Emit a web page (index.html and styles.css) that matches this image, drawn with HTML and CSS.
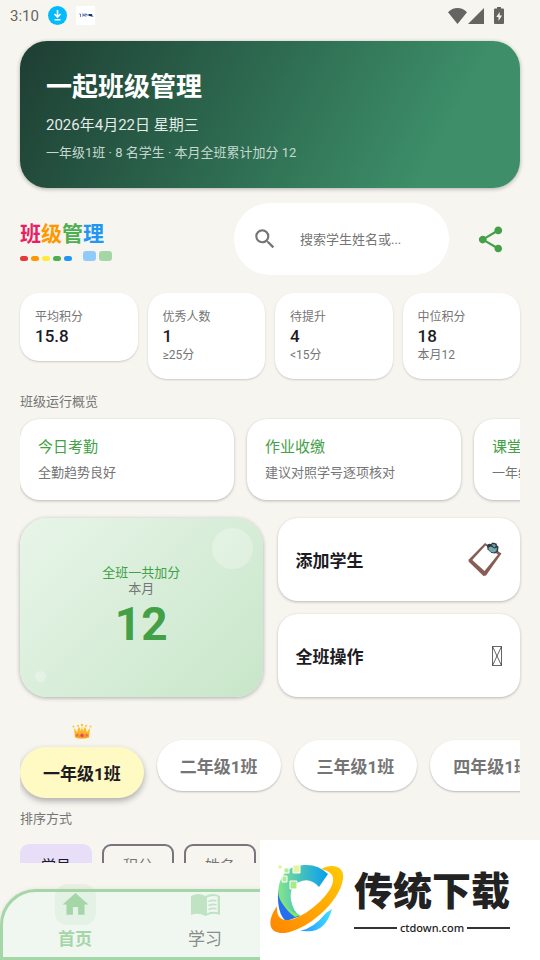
FILE: index.html
```html
<!DOCTYPE html>
<html lang="zh-CN">
<head>
    <meta charset="UTF-8">
    <meta name="viewport" content="width=device-width, initial-scale=1.0">
    <title>一起班级管理</title>
    <link rel="stylesheet" href="styles.css">
</head>
<body>
    <div class="status-bar">
        <span class="time">3:10</span>
        <svg class="status-app" viewBox="0 0 19 19">
            <circle cx="9.500" cy="9.500" r="9.500" fill="#03bafc"/>
            <path d="M9.500 4v6.500M6.500 8l3 3 3-3M6.500 13.700h6" fill="none" stroke="#fff" stroke-width="1.600"/>
        </svg>
        <svg class="status-app" viewBox="0 0 19 19">
            <rect width="19" height="19" fill="#fff"/>
            <path d="M3.300 8h1.200v3M6 8h1.400v2H6M8.500 8h2v.8h-2V10h2M11.500 8l2 2M13.500 8l-2 2" fill="none" stroke="#4a5f92" stroke-width=".8"/>
            <path d="M13 8h3l.3 1.500 1.400 1.300-4.700-.8z" fill="#15336d"/>
        </svg>
        <div class="status-right">
            <svg class="wifi" viewBox="0 0 19 16"><path d="M0 4.300C5-1.400 14-1.400 19 4.300L9.500 16z"/></svg>
            <svg class="signal" viewBox="0 0 16 16"><path d="M16 0v16H0z"/></svg>
            <svg class="battery" viewBox="0 0 10 17"><path d="M3 0h4v1.500h2a1 1 0 0 1 1 1V16a1 1 0 0 1-1 1H1a1 1 0 0 1-1-1V2.500a1 1 0 0 1 1-1h2z"/><path d="M5.700 5v3.600H8L4.500 14v-3.900H2.300z" fill="#f7f5f0"/></svg>
        </div>
    </div>

    <main>
        <header class="banner">
            <h1>一起班级管理</h1>
            <p class="date">2026年4月22日 星期三</p>
            <p class="summary">一年级1班 · 8 名学生 · 本月全班累计加分 12</p>
        </header>

        <div class="toolbar">
            <div class="logo">
                <div class="logo-text"><span class="pink">班</span><span class="orange">级</span><span class="green">管</span><span class="blue">理</span></div>
                <div class="logo-marks">
                    <i class="dot bg-red"></i>
                    <i class="dot bg-orange"></i>
                    <i class="dot bg-yellow"></i>
                    <i class="dot bg-green"></i>
                    <i class="dot bg-blue"></i>
                    <i class="block bg-sky"></i>
                    <i class="block bg-mint"></i>
                </div>
            </div>
            <label class="search">
                <svg viewBox="0 0 24 24"><path d="M15.500 14h-.79l-.28-.27A6.471 6.471 0 0 0 16 9.500 6.500 6.500 0 1 0 9.500 16c1.610 0 3.090-.59 4.230-1.570l.27.28v.79l5 4.990L20.490 19l-4.990-5zm-6 0C7.010 14 5 11.990 5 9.500S7.010 5 9.500 5 14 7.010 14 9.500 11.990 14 9.500 14z"/></svg>
                <input type="text" placeholder="搜索学生姓名或..." aria-label="搜索学生姓名">
            </label>
            <button class="share" aria-label="分享">
                <svg viewBox="0 0 24 24"><path d="M18 16.080c-.76 0-1.440.3-1.960.77L8.910 12.700c.05-.23.09-.46.09-.7s-.04-.47-.09-.7l7.050-4.110c.54.5 1.250.81 2.040.81 1.660 0 3-1.340 3-3s-1.340-3-3-3-3 1.340-3 3c0 .24.040.47.090.7L8.040 9.810C7.500 9.310 6.790 9 6 9c-1.660 0-3 1.340-3 3s1.340 3 3 3c.79 0 1.500-.31 2.040-.81l7.120 4.160c-.05.21-.08.43-.08.65 0 1.610 1.310 2.920 2.920 2.920s2.920-1.310 2.920-2.920-1.310-2.920-2.920-2.920z"/></svg>
            </button>
        </div>

        <section class="stats">
            <div class="stat">
                <p class="stat-label">平均积分</p>
                <p class="stat-value">15.8</p>
            </div>
            <div class="stat">
                <p class="stat-label">优秀人数</p>
                <p class="stat-value">1</p>
                <p class="stat-note">≥25分</p>
            </div>
            <div class="stat">
                <p class="stat-label">待提升</p>
                <p class="stat-value">4</p>
                <p class="stat-note">&lt;15分</p>
            </div>
            <div class="stat">
                <p class="stat-label">中位积分</p>
                <p class="stat-value">18</p>
                <p class="stat-note">本月12</p>
            </div>
        </section>

        <h2 class="section-title">班级运行概览</h2>
        <section class="overview">
            <article class="overview-card">
                <h3>今日考勤</h3>
                <p>全勤趋势良好</p>
            </article>
            <article class="overview-card">
                <h3>作业收缴</h3>
                <p>建议对照学号逐项核对</p>
            </article>
            <article class="overview-card">
                <h3>课堂表现</h3>
                <p>一年级1班</p>
            </article>
        </section>

        <section class="actions">
            <div class="total">
                <p class="total-label">全班一共加分</p>
                <p class="total-month">本月</p>
                <p class="total-value">12</p>
            </div>
            <div class="action-list">
                <button class="action">
                    <span>添加学生</span>
                    <svg class="clipboard" viewBox="0 0 34 36">
                        <path d="M17 1L33.500 11.500 18 33.500 15.500 34 .5 19.500.8 17.500z" fill="#865e55"/>
                        <path d="M17.500 3.500L30 12.500 16.500 29 4.300 18z" fill="#fff"/>
                        <path d="M19 3.500Q20 1 23 2l1.500-1.500 4 1 .5 2 1.500 1-.5 5-3 2-3.500-.5-4-3.500z" fill="#263b42"/>
                        <path d="M20.500 5.500l2.500-1 3.500 2 2.500-1-.5 3.500-2.500 1.500-3-.5-2.500-2.500z" fill="#78a5b0"/>
                        <path d="M23.500 2.500l3-.5 1.500 2-2 1.500z" fill="#729aa5"/>
                    </svg>
                </button>
                <button class="action">
                    <span>全班操作</span>
                    <svg class="placeholder" viewBox="0 0 10 20"><path d="M.5.5h9v19h-9zL9.500 19.500M9.500.5l-9 19" fill="none" stroke="#222" stroke-width=".7"/></svg>
                </button>
            </div>
        </section>

        <section class="classes">
            <div class="class-current">
                <svg class="crown" viewBox="0 0 20 18">
                    <path d="M2 6l3 4 2-5.500L9 9l1-5 1 5 2-4.500 2 5.500 3-4-1 9.500Q10 18 3 15.500z" fill="#fdb924"/>
                    <path d="M3 11.500l1 1.500 2-2 1.500 2 2.500-3 2.500 3 1.500-2 2 2 1-1.500-.4 3.500Q10 16.500 3.400 15z" fill="#f79329"/>
                    <g fill="#fcc62d"><circle cx="1.500" cy="4.500" r="1"/><circle cx="6" cy="3.800" r="1"/><circle cx="10" cy="3" r="1.200"/><circle cx="14" cy="3.800" r="1"/><circle cx="18.500" cy="4.500" r="1"/></g>
                    <circle cx="10" cy="13.500" r="1.500" fill="#d83b91"/>
                    <circle cx="5" cy="13" r=".8" fill="#c65a7b"/><circle cx="15" cy="13" r=".8" fill="#c65a7b"/>
                </svg>
                <button class="class-chip active">一年级1班</button>
            </div>
            <button class="class-chip">二年级1班</button>
            <button class="class-chip">三年级1班</button>
            <button class="class-chip">四年级1班</button>
        </section>

        <h2 class="section-title">排序方式</h2>
        <section class="sort">
            <button class="sort-chip active">学号</button>
            <button class="sort-chip">积分</button>
            <button class="sort-chip">姓名</button>
        </section>
    </main>

    <nav class="bottom-nav">
        <a href="#home" class="active">
            <span class="nav-icon"><svg viewBox="0 0 24 24"><path d="M10 20v-6h4v6h5v-8h3L12 3 2 12h3v8z"/></svg></span>
            首页
        </a>
        <a href="#study">
            <span class="nav-icon"><svg class="book" viewBox="0 0 30 24">
                <path d="M.5 3Q8-1 15 3q7-4 14.500 0v19q-7-3-14.500 1Q7.500 19 .5 22z"/>
                <path d="M16.500 4.500q5-2.500 10.700-1v15.700q-5.500-1.200-10.700 1z" fill="#f0f7f1"/>
                <path d="M18 8.500q4-1.700 8-.7M18 12.500q4-1.700 8-.7M18 16.500q4-1.700 8-.7" fill="none" stroke="#c0e3c3" stroke-width="1.700"/>
            </svg></span>
            学习
        </a>
    </nav>

    <aside class="download">
        <svg class="download-logo" viewBox="0 0 74 72">
            <defs>
                <linearGradient id="ring" x1="0" y1="1" x2="1" y2="0"><stop offset="0" stop-color="#ff8500"/><stop offset="1" stop-color="#ffca05"/></linearGradient>
                <linearGradient id="arc" x1="0" y1="0" x2="1" y2="0"><stop offset="0" stop-color="#87e58d"/><stop offset=".5" stop-color="#40bfc0"/><stop offset="1" stop-color="#079ff0"/></linearGradient>
                <linearGradient id="tail" x1="0" y1="0" x2="1" y2="0"><stop offset="0" stop-color="#2d91ff"/><stop offset="1" stop-color="#3de0ff"/></linearGradient>
            </defs>
            <path d="M8 28Q10 2 34 1q14-1 24 9L49 23Q40 13 29 18 19 23 21 36q2 11 9 16l-14 5Q8 48 8 28z" fill="url(#arc)"/>
            <path d="M8 27q1 17 22 25l-14 5Q7 50 8 27z" fill="#256ff0"/>
            <path d="M9 23q5 25 22 28l-6 2Q10 43 9 23z" fill="#82e66d"/>
            <path d="M30 67q14-3 26-18l6-4Q55 70 34 67z" fill="url(#tail)"/>
            <path d="M51 5C62-1 75 2 73 15 69 40 36 66 15 69-4 70-2 55 7 42c-1 13 6 17 19 12C43 47 62 28 63 17c1-7-4-10-12-12z" fill="url(#ring)"/>
            <g stroke="#fff" stroke-width="1">
                <path d="M8 1h4v4H8z" fill="#e3f29a"/>
                <path d="M14 4h5v5h-5z" fill="#b9eb97"/>
                <path d="M23 1h7v8h-7z" fill="#e5f49c"/>
                <path d="M12 12h5v6h-5z" fill="#b0e995"/>
                <path d="M20 17h7v8h-7z" fill="#a9e986"/>
            </g>
        </svg>
        <div class="download-name">
            <strong>传统下载</strong>
            <span>ctdown.com</span>
        </div>
    </aside>
</body>
</html>
```
FILE: styles.css
```css
* {
    box-sizing: border-box;
}

body {
    margin: 0;
    height: 100vh;
    display: flex;
    flex-direction: column;
    overflow: hidden;
    background-color: #f7f5f0;
    color: #1c1b1f;
    font-family: Roboto, "Noto Sans CJK SC", sans-serif;
    font-size: 13px;
}

h1, h2, h3, p {
    margin: 0;
}

button {
    border: none;
    font-family: inherit;
    cursor: pointer;
}

/* Status bar */
.status-bar {
    display: flex;
    flex-shrink: 0;
    align-items: center;
    height: 31px;
    padding: 0 36px 0 10px;
    color: #666460;
}

.time {
    font-size: 15px;
    margin-right: 9px;
}

.status-app {
    width: 19px;
    height: 19px;
    margin-right: 9px;
}

.status-right {
    display: flex;
    align-items: center;
    margin-left: auto;
    fill: #666460;
}

.wifi {
    width: 19px;
    height: 16px;
}

.signal {
    width: 16px;
    height: 16px;
    margin: 0 10px 0 1px;
}

.battery {
    width: 10px;
    height: 17px;
}

main {
    flex: 1;
    min-height: 0;
    overflow: hidden;
    padding: 10px 20px 0;
}

/* Banner */
.banner {
    display: flex;
    flex-direction: column;
    gap: 6px;
    padding: 26px 26px 25px;
    border-radius: 27px;
    background: linear-gradient(118deg, #1e3e33 0%, #2d6a50 45%, #3d8e69 82%);
    box-shadow: 0 1px 4px rgba(0, 0, 0, 0.3);
    color: #fff;
}

.banner h1 {
    font-size: 26px;
    line-height: 40px;
}

.date {
    font-size: 15px;
    line-height: 24px;
    color: #e4ece8;
}

.summary {
    line-height: 20px;
    color: #c5d9cf;
}

/* Logo, search and share */
.toolbar {
    display: flex;
    align-items: center;
    margin: 15px 0 18px;
}

.logo {
    padding-top: 4px;
}

.logo-text {
    font-size: 21px;
    font-weight: bold;
    line-height: 26px;
}

.pink { color: #e91e63; }
.orange { color: #ff9800; }
.green { color: #4caf50; }
.blue { color: #2196f3; }

.logo-marks {
    display: flex;
    align-items: flex-end;
    gap: 3px;
    margin-top: 4px;
}

.dot {
    width: 8px;
    height: 5px;
    border-radius: 3px;
}

.block {
    width: 13px;
    height: 10px;
    border-radius: 3px;
}

.dot + .block {
    margin-left: 8px;
}

.bg-red { background-color: #e53935; }
.bg-orange { background-color: #ff9800; }
.bg-yellow { background-color: #ffeb3b; }
.bg-green { background-color: #4caf50; }
.bg-blue { background-color: #2196f3; }
.bg-sky { background-color: #90caf9; }
.bg-mint { background-color: #a5d6a7; }

.search {
    display: flex;
    align-items: center;
    gap: 22px;
    width: 43%;
    height: 72px;
    margin-left: auto;
    padding: 0 18px;
    border-radius: 36px;
    background-color: #fff;
}

.search svg {
    flex-shrink: 0;
    width: 26px;
    height: 26px;
    fill: #757575;
}

.search input {
    flex: 1;
    min-width: 0;
    padding: 0;
    border: none;
    outline: none;
    background: none;
    font-family: inherit;
    font-size: 13px;
}

.search input::placeholder {
    color: #757575;
}

.share {
    display: flex;
    align-items: center;
    justify-content: center;
    width: 60px;
    height: 60px;
    margin-left: 11px;
    padding: 0;
    background: none;
}

.share svg {
    width: 31px;
    height: 31px;
    fill: #43a047;
}

/* Stats */
.stats {
    display: grid;
    grid-template-columns: repeat(4, 1fr);
    align-items: start;
    gap: 10px;
}

.stat {
    padding: 15px;
    border-radius: 19px;
    background-color: #fff;
    box-shadow: 0 1px 2px rgba(0, 0, 0, 0.18);
}

.stat-label,
.stat-note {
    font-size: 12px;
    line-height: 18px;
    color: #757575;
}

.stat-value {
    font-size: 17px;
    font-weight: 500;
    line-height: 20px;
}

.section-title {
    margin: 14px 0 8px;
    font-size: 13px;
    font-weight: normal;
    line-height: 18px;
    color: #757575;
}

/* Overview */
.overview {
    display: flex;
    gap: 13px;
    overflow-x: clip;
}

.overview-card {
    flex: 0 0 214px;
    padding: 16px 18px 15px;
    border-radius: 20px;
    background-color: #fff;
    box-shadow: 0 1px 3px rgba(0, 0, 0, 0.25);
    line-height: 25px;
    color: #757575;
}

.overview-card h3 {
    font-size: 15px;
    font-weight: normal;
    color: #43a047;
}

/* Total and actions */
.actions {
    display: grid;
    grid-template-columns: 1fr 1fr;
    gap: 15px;
    margin-top: 18px;
}

.total {
    position: relative;
    display: flex;
    flex-direction: column;
    justify-content: center;
    text-align: center;
    border-radius: 27px;
    background: linear-gradient(135deg, #e8f5e9, #c8e6c9);
    box-shadow: 0 1px 4px rgba(0, 0, 0, 0.3);
    line-height: 16px;
    color: #757575;
}

.total::before,
.total::after {
    content: "";
    position: absolute;
    border-radius: 50%;
    background-color: rgba(255, 255, 255, 0.28);
}

.total::before {
    top: 10px;
    right: 10px;
    width: 41px;
    height: 41px;
}

.total::after {
    left: 15px;
    bottom: 15px;
    width: 11px;
    height: 11px;
}

.total-label {
    color: #43a047;
}

.total-value {
    font-size: 46px;
    font-weight: bold;
    line-height: 54px;
    color: #43a047;
}

.action-list {
    display: grid;
    gap: 13px;
}

.action {
    display: flex;
    align-items: center;
    justify-content: space-between;
    height: 83px;
    padding: 0 18px;
    border-radius: 20px;
    background-color: #fff;
    box-shadow: 0 1px 3px rgba(0, 0, 0, 0.25);
    color: #1c1b1f;
    font-size: 17px;
    font-weight: bold;
}

.clipboard {
    width: 34px;
    height: 36px;
}

.placeholder {
    width: 10px;
    height: 20px;
}

/* Class chips */
.classes {
    display: flex;
    align-items: flex-end;
    gap: 13px;
    margin-top: 25px;
    overflow-x: clip;
}

.class-current {
    display: flex;
    flex-direction: column;
    align-items: center;
    gap: 7px;
}

.crown {
    width: 20px;
    height: 18px;
}

.class-chip {
    flex-shrink: 0;
    height: 51px;
    margin-bottom: 7px;
    padding: 0 23px;
    border-radius: 26px;
    background-color: #fff;
    box-shadow: 0 1px 2px rgba(0, 0, 0, 0.25);
    color: #757575;
    font-size: 17px;
    font-weight: bold;
    white-space: nowrap;
}

.class-chip.active {
    margin-bottom: 0;
    background-color: #fff9c4;
    box-shadow: 0 3px 6px rgba(0, 0, 0, 0.3);
    color: #1c1b1f;
}

.classes + .section-title {
    margin: 12px 0 16px;
}

/* Sort chips */
.sort {
    display: flex;
    gap: 10px;
}

.sort-chip {
    width: 72px;
    height: 41px;
    padding: 0;
    border: 2px solid #79747e;
    border-radius: 9px;
    background: none;
    color: #757575;
    font-size: 15px;
}

.sort-chip.active {
    border-color: #e8def8;
    background-color: #e8def8;
    color: #1d192b;
}

/* Bottom navigation */
.bottom-nav {
    display: grid;
    flex-shrink: 0;
    grid-template-columns: repeat(4, 1fr);
    height: 71px;
    margin-top: 26px;
    padding: 0 7px;
    border: 3px solid #a5d6a7;
    border-radius: 36px 36px 0 0;
    background-color: #f0f7f1;
    box-shadow: 0 0 4px rgba(0, 0, 0, 0.08);
}

.bottom-nav a {
    display: flex;
    flex-direction: column;
    align-items: center;
    margin-top: -8px;
    color: #8a8d8a;
    font-size: 17px;
    line-height: 28px;
    text-decoration: none;
}

.bottom-nav a.active {
    color: #a5d6a7;
    font-weight: bold;
}

.nav-icon {
    display: flex;
    align-items: center;
    justify-content: center;
    width: 41px;
    height: 41px;
    border-radius: 12px;
    fill: #c0e3c3;
}

.active .nav-icon {
    background-color: rgba(165, 214, 167, 0.16);
    fill: #a5d6a7;
}

.nav-icon svg {
    width: 31px;
    height: 31px;
}

.nav-icon .book {
    height: 24px;
}

/* Download badge over the page corner */
.download {
    position: fixed;
    right: 0;
    bottom: 0;
    display: flex;
    align-items: center;
    gap: 10px;
    width: 280px;
    height: 120px;
    padding: 0 10px;
    background-color: #fff;
    color: #222;
}

.download-logo {
    flex-shrink: 0;
    width: 74px;
    height: 72px;
}

.download-name strong {
    display: block;
    font-family: "Noto Sans CJK SC", sans-serif;
    font-size: 39px;
    font-weight: 900;
    line-height: 56px;
    white-space: nowrap;
}

.download-name span {
    display: flex;
    align-items: center;
    gap: 3px;
    font-family: "Noto Sans", sans-serif;
    font-size: 11px;
    font-weight: 500;
    line-height: 24px;
}

.download-name span::before,
.download-name span::after {
    content: "";
    flex: 1;
    height: 2px;
    background-color: #333;
}
```
